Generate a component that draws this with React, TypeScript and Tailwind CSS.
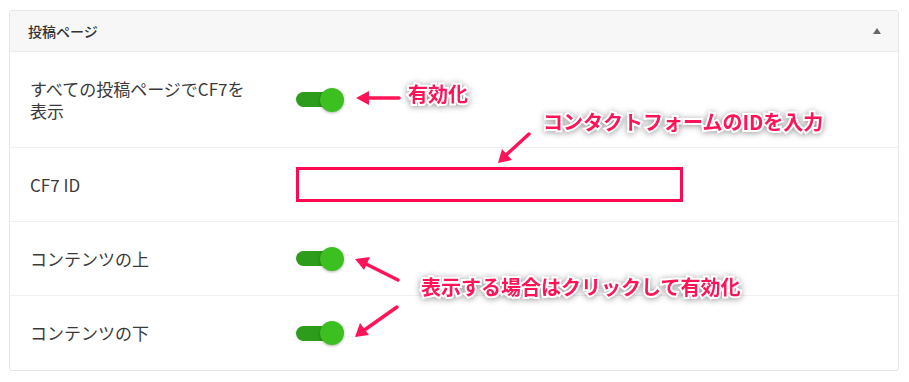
import React from "react";

const font = "font-['Noto_Sans_CJK_JP','Noto_Sans',sans-serif]";

function Toggle() {
  return (
    <div className="flex items-center w-[48px] h-6">
      <div className="w-[34px] h-[15px] rounded-full bg-[#2d9c1b]" />
      <div className="-ml-[10px] w-6 h-6 rounded-full bg-[#3bbf21] shadow-[0_1px_3px_rgba(0,0,0,0.3)]" />
    </div>
  );
}

function Note({ text, className }: { text: string; className: string }) {
  return (
    <div
      className={`absolute whitespace-nowrap text-[20px] leading-none font-bold text-[#ff1457] [-webkit-text-stroke:4px_#fff] [paint-order:stroke_fill] drop-shadow-[0_1px_3px_rgba(0,0,0,0.4)] ${className}`}
    >
      {text}
    </div>
  );
}

export default function App() {
  const rows = [
    { label: "すべての投稿ページでCF7を表示", kind: "toggle", h: "h-[96px]" },
    { label: "CF7 ID", kind: "input", h: "h-[74px]" },
    { label: "コンテンツの上", kind: "toggle", h: "h-[74px]" },
    { label: "コンテンツの下", kind: "toggle", h: "h-[74px]" },
  ];

  return (
    <div className={`relative w-[909px] h-[382px] bg-white pt-[10px] pl-[9px] ${font}`}>
      <div className="w-[890px] border border-[#e5e5e5] rounded-[3px] overflow-hidden">
        <div className="h-[41px] flex items-center justify-between pl-[18px] pr-[17px] bg-[#f7f7f7] border-b border-[#ececec]">
          <span className="text-[14px] font-medium text-[#333]">投稿ページ</span>
          <svg width="8" height="6" viewBox="0 0 8 6">
            <polygon points="4,0 8,6 0,6" fill="#666" />
          </svg>
        </div>
        {rows.map((r, i) => (
          <div
            key={r.label}
            className={`${r.h} flex items-center pl-[20px] ${i < rows.length - 1 ? "border-b border-[#f0f0f0]" : ""}`}
          >
            <div className="w-[266px] shrink-0">
              <p className="max-w-[226px] text-[17px] leading-[22px] text-[#3a3a3a]">{r.label}</p>
            </div>
            {r.kind === "toggle" ? (
              <Toggle />
            ) : (
              <div className="w-[387px] h-[35px] border-[3px] border-[#ff0a52] bg-white" />
            )}
          </div>
        ))}
      </div>

      <svg className="absolute inset-0 pointer-events-none" width="909" height="382">
        <g stroke="#ff1457" strokeWidth="3.5" strokeLinecap="round">
          <line x1="399" y1="98" x2="366" y2="98" />
          <line x1="529" y1="134" x2="505" y2="156" />
          <line x1="398" y1="280" x2="364" y2="263" />
          <line x1="397" y1="307" x2="363" y2="331" />
        </g>
        <g fill="#ff1457">
          <polygon points="356,98 369,91 369,105" />
          <polygon points="498,163 502,149 512,160" />
          <polygon points="355,259 370,257 364,270" />
          <polygon points="355,337 360,323 369,335" />
        </g>
      </svg>

      <Note text="有効化" className="left-[408px] top-[84px]" />
      <Note text="コンタクトフォームのIDを入力" className="left-[543px] top-[112px]" />
      <Note text="表示する場合はクリックして有効化" className="left-[421px] top-[277px]" />
    </div>
  );
}
